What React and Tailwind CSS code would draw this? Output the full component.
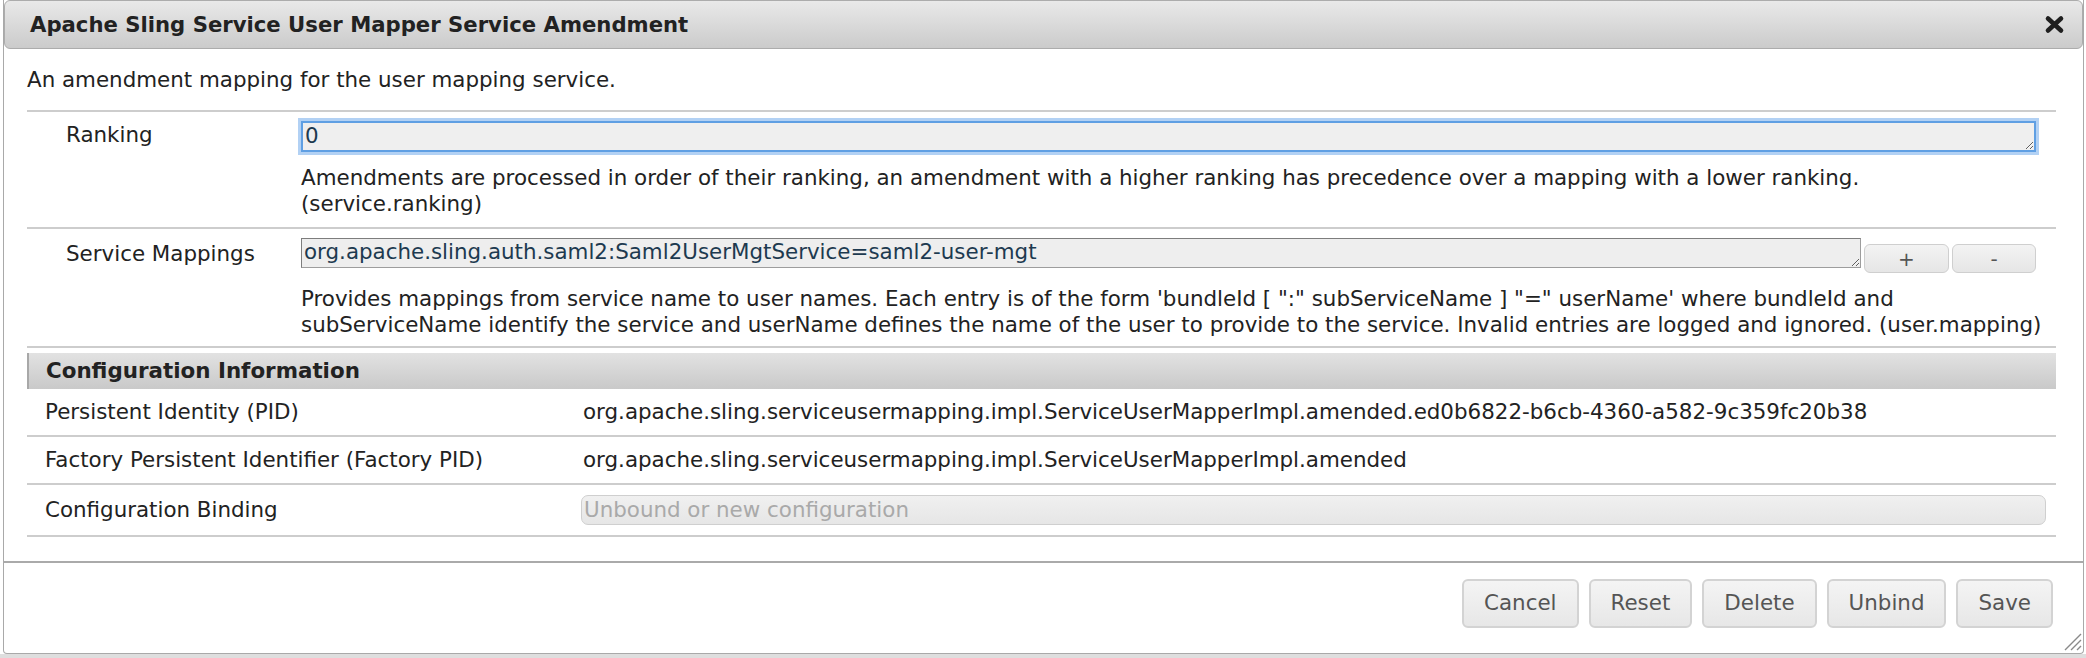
import { useState } from 'react'

const helpRanking = [
  'Amendments are processed in order of their ranking, an amendment with a higher ranking has precedence over a mapping with a lower ranking.',
  '(service.ranking)',
]

const helpMappings = [
  "Provides mappings from service name to user names. Each entry is of the form 'bundleId [ \":\" subServiceName ] \"=\" userName' where bundleId and",
  'subServiceName identify the service and userName defines the name of the user to provide to the service. Invalid entries are logged and ignored. (user.mapping)',
]

const configInfo = [
  {
    label: 'Persistent Identity (PID)',
    value: 'org.apache.sling.serviceusermapping.impl.ServiceUserMapperImpl.amended.ed0b6822-b6cb-4360-a582-9c359fc20b38',
  },
  {
    label: 'Factory Persistent Identifier (Factory PID)',
    value: 'org.apache.sling.serviceusermapping.impl.ServiceUserMapperImpl.amended',
  },
]

function CloseIcon() {
  return (
    <svg width="21" height="19" viewBox="0 0 21 19">
      <path d="M4 3.5 L17 15.5 M17 3.5 L4 15.5" stroke="#1f1f1f" strokeWidth="4.6" strokeLinecap="round" />
    </svg>
  )
}

function Grip() {
  return (
    <svg width="22" height="22" viewBox="0 0 22 22" className="absolute right-[1px] bottom-[2px]">
      <path d="M21 5 L5 21 M21 11 L11 21 M21 17 L17 21" stroke="#8a8a8a" strokeWidth="1.4" />
    </svg>
  )
}

function SmallButton({ children }) {
  return (
    <button className="h-[29px] rounded-[6px] border border-[#cfcfcf] bg-linear-to-b from-[#f3f3f3] to-[#e6e6e6] text-[20px] leading-none text-[#555]">
      {children}
    </button>
  )
}

function FooterButton({ children }) {
  return (
    <button className="h-[49px] px-[20px] rounded-[6px] border-2 border-[#d3d3d3] bg-linear-to-b from-[#f4f4f4] to-[#e7e7e7] text-[21.4px] text-[#555]">
      {children}
    </button>
  )
}

function HelpText({ lines }) {
  return (
    <p className="mt-[13px] leading-[26px] whitespace-nowrap">
      {lines[0]}
      <br />
      {lines[1]}
    </p>
  )
}

export default function App() {
  const [ranking, setRanking] = useState('0')
  const [mapping, setMapping] = useState('org.apache.sling.auth.saml2:Saml2UserMgtService=saml2-user-mgt')

  return (
    <div className="w-[2086px] h-[658px] bg-white flex flex-col font-['DejaVu_Sans',sans-serif] text-[21.4px] text-[#222] overflow-hidden">
      <div className="relative ml-[3px] mr-[2px] h-[654px] flex flex-col border border-t-0 border-[#a9a9a9] rounded-b-[4px]">
        {/* Title bar */}
        <div className="h-[49px] flex items-center justify-between pl-[25px] pr-[17px] rounded-[6px] border border-[#acacac] bg-linear-to-b from-[#e9e9e9] to-[#cbcbcb]">
          <span className="text-[21.2px] font-bold text-[#222]">Apache Sling Service User Mapper Service Amendment</span>
          <CloseIcon />
        </div>

        <div className="pl-[23px] pr-[27px]">
          <p className="pt-[18px] leading-[26px]">An amendment mapping for the user mapping service.</p>

          {/* Properties */}
          <div className="mt-[17px] border-t-2 border-[#cdcdcd]">
            <div className="grid grid-cols-[274px_1fr] border-b-2 border-[#cdcdcd]">
              <div className="pl-[39px] pt-[10px] leading-[26px]">Ranking</div>
              <div className="pt-[9px] pb-[10px]">
                <textarea
                  value={ranking}
                  onChange={(e) => setRanking(e.target.value)}
                  rows={1}
                  className="block w-[1735px] h-[31px] px-[2px] bg-[#efefef] border-2 border-[#5f9fe3] shadow-[0_0_0_3px_#b2d1f4] text-[21.4px] leading-[26px] text-[#1d3a50] outline-none resize"
                />
                <HelpText lines={helpRanking} />
              </div>
            </div>

            <div className="grid grid-cols-[274px_1fr] border-b-2 border-[#cdcdcd]">
              <div className="pl-[39px] pt-[12px] leading-[26px]">Service Mappings</div>
              <div className="pt-[9px] pb-[8px]">
                <div className="w-[1735px] flex items-start gap-[3px]">
                  <textarea
                    value={mapping}
                    onChange={(e) => setMapping(e.target.value)}
                    rows={1}
                    className="block flex-1 h-[30px] px-[2px] bg-[#eeeeee] border border-[#9d9d9d] border-t-[#7d7d7d] border-l-[#7d7d7d] text-[21.4px] leading-[26px] text-[#1d3a50] outline-none resize"
                  />
                  <div className="mt-[6px] grid grid-cols-[85px_84px] gap-[3px]">
                    <SmallButton>+</SmallButton>
                    <SmallButton>-</SmallButton>
                  </div>
                </div>
                <HelpText lines={helpMappings} />
              </div>
            </div>
          </div>

          {/* Configuration Information */}
          <div className="mt-[5px]">
            <div className="h-[36px] flex items-center pl-[17px] border-l-2 border-[#a8a8a8] bg-linear-to-b from-[#e2e2e2] to-[#c9c9c9] font-bold text-[21.4px]">
              Configuration Information
            </div>
            {configInfo.map((row) => (
              <div key={row.label} className="h-[48px] grid grid-cols-[556px_1fr] items-center border-b-2 border-[#cdcdcd]">
                <div className="pl-[18px]">{row.label}</div>
                <div>{row.value}</div>
              </div>
            ))}
            <div className="h-[52px] grid grid-cols-[554px_1fr] items-center border-b-2 border-[#cdcdcd]">
              <div className="pl-[18px]">Configuration Binding</div>
              <div className="pr-[10px]">
                <div className="h-[30px] flex items-center px-[2px] rounded-[7px] border border-[#cfcfcf] bg-linear-to-b from-[#f0f0f0] to-[#e6e6e6] text-[#a9a9a9]">
                  Unbound or new configuration
                </div>
              </div>
            </div>
          </div>
        </div>

        {/* Footer */}
        <div className="mt-[24px] border-t-2 border-[#aaaaaa] flex justify-end gap-[10px] pt-[16px] pr-[30px]">
          <FooterButton>Cancel</FooterButton>
          <FooterButton>Reset</FooterButton>
          <FooterButton>Delete</FooterButton>
          <FooterButton>Unbind</FooterButton>
          <FooterButton>Save</FooterButton>
        </div>

        <Grip />
      </div>
      <div className="flex-1 bg-[#dedede]" />
    </div>
  )
}
